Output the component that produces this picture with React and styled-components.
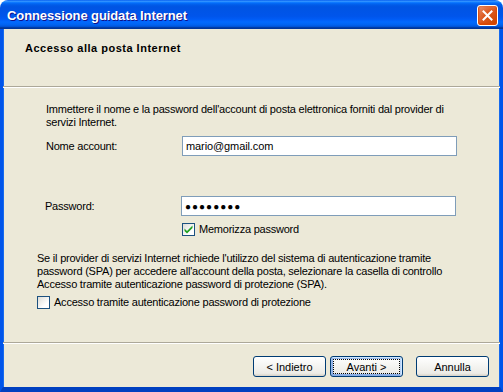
import React from "react";
import styled, { createGlobalStyle } from "styled-components";

const GlobalStyle = createGlobalStyle`
	html, body {
		margin: 0;
		padding: 0;
		background: #ffffff;
	}
	* {
		box-sizing: border-box;
	}
`;

const UI_FONT = `"Liberation Sans", Arial, sans-serif`;

const Window = styled.div`
	width: 503px;
	height: 392px;
	display: flex;
	flex-direction: column;
	font-family: ${UI_FONT};
	font-size: 11px;
	color: #000;
`;

const TitleBar = styled.div`
	height: 29px;
	flex: none;
	display: flex;
	align-items: center;
	justify-content: space-between;
	padding: 0 5px 0 7px;
	border-radius: 8px 8px 0 0;
	background: linear-gradient(
		to bottom,
		#0058ee 0%,
		#3593ff 4%,
		#288eff 6%,
		#127dff 8%,
		#036ffc 10%,
		#0262ee 14%,
		#0057e5 20%,
		#0054e3 24%,
		#0055eb 56%,
		#005bf5 66%,
		#026afe 76%,
		#0062ef 86%,
		#0052d6 92%,
		#0040ab 94%,
		#003092 100%
	);
`;

const Title = styled.span`
	color: #fff;
	font-weight: bold;
	font-size: 13px;
	letter-spacing: -0.1px;
	text-shadow: 1px 1px #0f1089;
	margin-top: 1px;
`;

const CloseButton = styled.div`
	width: 21px;
	height: 21px;
	border: 1px solid #fff;
	border-radius: 3px;
	display: flex;
	align-items: center;
	justify-content: center;
	background: radial-gradient(
		circle at 90% 90%,
		#cc4600 0%,
		#dc5a20 55%,
		#e89a7c 100%
	);
	box-shadow: inset 0 -1px 2px 1px #da4600;
	margin-top: 1px;
`;

const Frame = styled.div`
	flex: 1;
	display: flex;
	flex-direction: column;
	background: #ece9d8;
	border-left: 3px solid #0055ea;
	border-right: 3px solid #0055ea;
	border-bottom: 5px solid #0040c0;
	box-shadow: inset 1px 0 #166aee, inset -1px 0 #166aee;
`;

const Header = styled.div`
	height: 58px;
	flex: none;
	padding: 13px 0 0 22px;
	border-bottom: 1px solid #aca899;
`;

const HeaderTitle = styled.div`
	font-weight: bold;
	font-size: 11px;
	line-height: 13px;
	letter-spacing: 0.5px;
`;

const Main = styled.div`
	flex: 1;
	display: flex;
	flex-direction: column;
	align-items: flex-start;
	padding: 15px 0 0 34px;
	border-top: 1px solid #fff;
	line-height: 13px;
	letter-spacing: -0.22px;
`;

const Paragraph = styled.p`
	margin: ${(p) => p.$top || 0}px 0 0 ${(p) => p.$indent || 0}px;
	white-space: nowrap;
`;

const FieldRow = styled.div`
	display: flex;
	align-items: center;
	margin: ${(p) => p.$top}px 0 0 9px;
`;

const Label = styled.label`
	width: 136px;
	margin-left: ${(p) => p.$shift || 0}px;
`;

const Field = styled.div`
	width: 275px;
	height: 20px;
	border: 1px solid #7f9db9;
	background: #fff;
	padding: 0 3px;
	display: flex;
	align-items: center;
	font-size: ${(p) => (p.$secret ? "10px" : "11px")};
	letter-spacing: ${(p) => (p.$secret ? "1px" : "-0.1px")};
`;

const CheckRow = styled.div`
	display: flex;
	align-items: center;
	gap: 4px;
	margin: ${(p) => p.$top}px 0 0 ${(p) => p.$indent || 0}px;
`;

const Box = styled.span`
	width: 13px;
	height: 13px;
	flex: none;
	border: 1px solid #1c5180;
	background: linear-gradient(135deg, #dcdcd7 0%, #fff 70%, #fff 100%);
	display: flex;
	align-items: center;
	justify-content: center;
`;

const Footer = styled.div`
	height: 45px;
	flex: none;
	display: flex;
	justify-content: flex-end;
	padding: 13px 11px 0 0;
	border-top: 1px solid #aca899;
	box-shadow: inset 0 1px #fff;
`;

const Button = styled.button`
	width: 73px;
	height: 21px;
	margin-left: ${(p) => p.$gap}px;
	font-family: ${UI_FONT};
	font-size: 11px;
	color: #000;
	border: 1px solid #003c74;
	border-radius: 3px;
	padding: 0;
	position: relative;
	background: linear-gradient(180deg, #fff 0%, #f6f6f3 40%, #ecebe6 86%, #d6d0c5 100%);
	box-shadow: ${(p) =>
		p.$default
			? "inset -1px 1px #cee7ff, inset 1px 2px #98b8ea, inset -2px 2px #bcd4f6, inset 1px -1px #89ade4, inset 2px -2px #89ade4"
			: "none"};

	&::after {
		content: "";
		display: ${(p) => (p.$default ? "block" : "none")};
		position: absolute;
		inset: 2px;
		border: 1px dotted #000;
	}
`;

function Check() {
	return (
		<svg width="9" height="9" viewBox="0 0 9 9">
			<path d="M0.5 3.5 L3 6 L8.5 0.5 L8.5 3 L3 8.5 L0.5 6 Z" fill="#21a121" />
		</svg>
	);
}

function CloseIcon() {
	return (
		<svg width="11" height="11" viewBox="0 0 11 11">
			<path
				d="M1.5 1.5 L9.5 9.5 M9.5 1.5 L1.5 9.5"
				stroke="#fff"
				strokeWidth="2"
				strokeLinecap="square"
			/>
		</svg>
	);
}

export default function App() {
	return (
		<>
			<GlobalStyle />
			<Window>
				<TitleBar>
					<Title>Connessione guidata Internet</Title>
					<CloseButton>
						<CloseIcon />
					</CloseButton>
				</TitleBar>
				<Frame>
					<Header>
						<HeaderTitle>Accesso alla posta Internet</HeaderTitle>
					</Header>
					<Main>
						<Paragraph $indent={9}>
							Immettere il nome e la password dell'account di posta elettronica
							forniti dal provider di
							<br />
							servizi Internet.
						</Paragraph>
						<FieldRow $top={7}>
							<Label>Nome account:</Label>
							<Field>mario@gmail.com</Field>
						</FieldRow>
						<FieldRow $top={40}>
							<Label $shift={-1}>Password:</Label>
							<Field $secret>●●●●●●●●</Field>
						</FieldRow>
						<CheckRow $top={7} $indent={145}>
							<Box>
								<Check />
							</Box>
							Memorizza password
						</CheckRow>
						<Paragraph $top={16}>
							Se il provider di servizi Internet richiede l'utilizzo del sistema di
							autenticazione tramite
							<br />
							password (SPA) per accedere all'account della posta, selezionare la
							casella di controllo
							<br />
							Accesso tramite autenticazione password di protezione (SPA).
						</Paragraph>
						<CheckRow $top={5}>
							<Box />
							Accesso tramite autenticazione password di protezione
						</CheckRow>
					</Main>
					<Footer>
						<Button $gap={0}>&lt; Indietro</Button>
						<Button $gap={4} $default>
							Avanti &gt;
						</Button>
						<Button $gap={13}>Annulla</Button>
					</Footer>
				</Frame>
			</Window>
		</>
	);
}
